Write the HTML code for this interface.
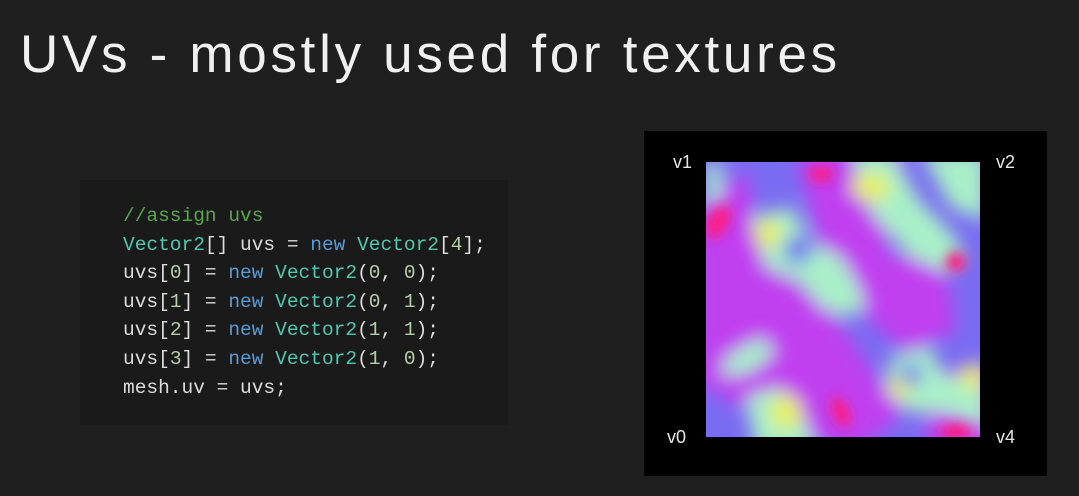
<!DOCTYPE html>
<html><head><meta charset="utf-8"><style>
html,body{margin:0;padding:0}
body{width:1079px;height:496px;background:#1f1f1f;position:relative;overflow:hidden;font-family:"Liberation Sans",sans-serif}
.title{position:absolute;left:20px;top:24px;font-size:53px;color:#f0f0f0;letter-spacing:3.7px;white-space:nowrap;font-weight:normal}
.code{position:absolute;left:80px;top:180px;width:428px;height:245px;background:#1a1a1a}
pre{position:absolute;left:123px;top:202px;margin:0;font-family:"Liberation Mono",monospace;font-size:19.5px;line-height:28.6px;color:#dcdcdc}
.c{color:#57a64a}.t{color:#4ec9b0}.k{color:#569cd6}.n{color:#b5cea8}
.panel{position:absolute;left:644px;top:131px;width:403px;height:345px;background:#000}
.lbl{position:absolute;color:#e6e6e6;font-size:18px}
</style></head><body>
<div class="title">UVs - mostly used for textures</div>
<div class="code"></div>
<pre><span class="c">//assign uvs</span>
<span class="t">Vector2</span>[] uvs = <span class="k">new</span> <span class="t">Vector2</span>[<span class="n">4</span>];
uvs[<span class="n">0</span>] = <span class="k">new</span> <span class="t">Vector2</span>(<span class="n">0</span>, <span class="n">0</span>);
uvs[<span class="n">1</span>] = <span class="k">new</span> <span class="t">Vector2</span>(<span class="n">0</span>, <span class="n">1</span>);
uvs[<span class="n">2</span>] = <span class="k">new</span> <span class="t">Vector2</span>(<span class="n">1</span>, <span class="n">1</span>);
uvs[<span class="n">3</span>] = <span class="k">new</span> <span class="t">Vector2</span>(<span class="n">1</span>, <span class="n">0</span>);
mesh.uv = uvs;</pre>
<div class="panel"></div>
<svg style="position:absolute;left:706px;top:162px" width="274" height="275" viewBox="0 0 274 275">
<defs>
<filter id="b" x="-20%" y="-20%" width="140%" height="140%"><feGaussianBlur stdDeviation="9"/></filter>
<filter id="b2" x="-50%" y="-50%" width="200%" height="200%"><feGaussianBlur stdDeviation="6"/></filter>
<clipPath id="cl"><rect width="274" height="275"/></clipPath>
</defs>
<g clip-path="url(#cl)">
<rect width="274" height="275" fill="#7a6cf2"/>
<g filter="url(#b)">
<g fill="#c040f0">
<path d="M-10 40 L40 10 L60 100 L120 140 L160 200 L200 250 L150 290 L60 260 L-10 220 Z"/>
<path d="M90 -10 L200 -10 L180 90 L240 100 L250 170 L200 190 L130 130 L110 70 Z"/>
<path d="M220 210 L290 200 L290 290 L220 290 Z"/>
</g>
<g fill="#a8f0c8">
<path d="M0 0 L15 0 L15 35 L0 45Z"/>
<path d="M45 55 L85 45 L105 80 L135 95 L150 120 L160 145 L140 155 L115 145 L95 120 L60 105 Z"/>
<path d="M145 -10 L185 -10 L215 40 L245 70 L260 95 L240 110 L205 95 L165 50 Z"/>
<path d="M215 -10 L280 -10 L280 60 L245 45 Z"/>
<path d="M20 195 L55 175 L70 190 L45 210 L15 215Z"/>
<path d="M40 235 L75 225 L100 260 L110 290 L50 290 Z"/>
<path d="M185 195 L225 185 L235 210 L280 225 L280 265 L240 250 L205 250 L180 230 Z"/>
</g>
<g fill="#e8f060">
<circle cx="62" cy="72" r="14"/>
<ellipse cx="165" cy="25" rx="20" ry="14"/>
<ellipse cx="80" cy="250" rx="16" ry="18"/>
<ellipse cx="267" cy="215" rx="12" ry="14"/>
<ellipse cx="195" cy="225" rx="12" ry="11"/>
</g>
<g fill="#7070f0">
<circle cx="92" cy="88" r="14"/>
<circle cx="205" cy="213" r="11"/>
</g>
</g>
<g filter="url(#b2)" fill="#ff1a80">
<ellipse cx="12" cy="60" rx="10" ry="18" transform="rotate(30 12 60)"/>
<ellipse cx="115" cy="12" rx="12" ry="8"/>
<circle cx="250" cy="100" r="10"/>
<ellipse cx="135" cy="250" rx="8" ry="16" transform="rotate(-25 135 250)"/>
<ellipse cx="250" cy="270" rx="16" ry="8"/>
</g>
</g>
</svg>
<div class="lbl" style="left:673px;top:152px">v1</div>
<div class="lbl" style="left:996px;top:152px">v2</div>
<div class="lbl" style="left:667px;top:427px">v0</div>
<div class="lbl" style="left:996px;top:427px">v4</div>
</body></html>
